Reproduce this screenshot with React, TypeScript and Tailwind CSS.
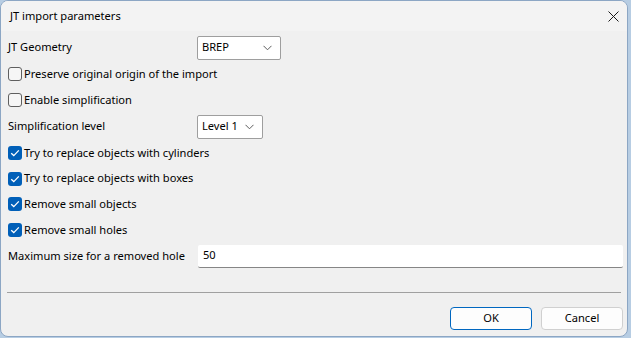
import React from "react";

const FONT = { fontFamily: '"Segoe UI", "Noto Sans", sans-serif' };

function Chevron() {
  return (
    <svg width="9" height="6" viewBox="0 0 9 6" className="shrink-0">
      <path d="M0.5 0.8 L4.5 4.8 L8.5 0.8" fill="none" stroke="#5d5d5d" strokeWidth="1" />
    </svg>
  );
}

function Select({ value, width }: { value: string; width: string }) {
  return (
    <div
      className={`${width} h-[24px] bg-white border border-[#9e9e9e] rounded-[2px] flex items-center justify-between pl-[4px] pr-[8px]`}
    >
      <span>{value}</span>
      <Chevron />
    </div>
  );
}

function Check({ checked }: { checked?: boolean }) {
  if (checked)
    return (
      <span className="w-[14px] h-[14px] rounded-[3px] bg-[#005fb8] flex items-center justify-center shrink-0">
        <svg width="10" height="8" viewBox="0 0 10 8">
          <path d="M1.2 4.2 L3.8 6.6 L8.8 1.4" fill="none" stroke="white" strokeWidth="1.3" />
        </svg>
      </span>
    );
  return <span className="w-[14px] h-[14px] rounded-[3px] border border-[#5f5f5f] bg-[#f6f6f6] shrink-0" />;
}

function CheckRow({ label, checked, h }: { label: string; checked?: boolean; h: string }) {
  return (
    <div className={`${h} flex items-center gap-[2px] pl-[7px]`}>
      <Check checked={checked} />
      <span className="whitespace-nowrap">{label}</span>
    </div>
  );
}

export default function App() {
  return (
    <div className="w-[631px] h-[338px] bg-[#b7cde3] text-[11.1px] text-black" style={FONT}>
      <div className="w-[628px] h-[337px] rounded-[8px] border border-[#8ca6c4] overflow-hidden flex flex-col bg-[#f0f0f0]">
        {/* title bar */}
        <div className="h-[30px] bg-[#f3f3f3] flex items-center justify-between pl-[9px] pr-[8px] shrink-0">
          <span>JT import parameters</span>
          <svg width="11" height="11" viewBox="0 0 11 11">
            <path d="M0.5 0.5 L10.5 10.5 M10.5 0.5 L0.5 10.5" stroke="#1a1a1a" strokeWidth="1" />
          </svg>
        </div>

        <div className="flex flex-col pt-[3px]">
          <div className="h-[27px] flex items-center pl-[7px]">
            <span className="w-[189px]">JT Geometry</span>
            <Select value="BREP" width="w-[84px]" />
          </div>
          <CheckRow h="h-[26px]" label="Preserve original origin of the import" />
          <CheckRow h="h-[26px]" label="Enable simplification" />
          <div className="h-[27px] flex items-center pl-[7px]">
            <span className="w-[189px]">Simplification level</span>
            <Select value="Level 1" width="w-[66px]" />
          </div>
          <CheckRow h="h-[26px]" checked label="Try to replace objects with cylinders" />
          <CheckRow h="h-[25px]" checked label="Try to replace objects with boxes" />
          <CheckRow h="h-[26px]" checked label="Remove small objects" />
          <CheckRow h="h-[26px]" checked label="Remove small holes" />
          <div className="h-[26px] flex items-center pl-[7px] pr-[4px]">
            <span className="w-[190px] whitespace-nowrap">Maximum size for a removed hole</span>
            <div className="flex-1 h-[23px] bg-white border-b border-[#868686] rounded-[2px] flex items-center pl-[5px]">
              50
            </div>
          </div>
        </div>

        <div className="mx-[6px] mt-[23px] h-px bg-[#a0a0a0]" />

        <div className="flex justify-end gap-[9px] pr-[4px] mt-[14px]">
          <button className="w-[82px] h-[23px] rounded-[4px] border border-[#0067c0] bg-[#fdfdfd] flex items-center justify-center">
            OK
          </button>
          <button className="w-[82px] h-[23px] rounded-[4px] border border-[#d0d0d0] bg-[#fdfdfd] flex items-center justify-center">
            Cancel
          </button>
        </div>
      </div>
    </div>
  );
}
